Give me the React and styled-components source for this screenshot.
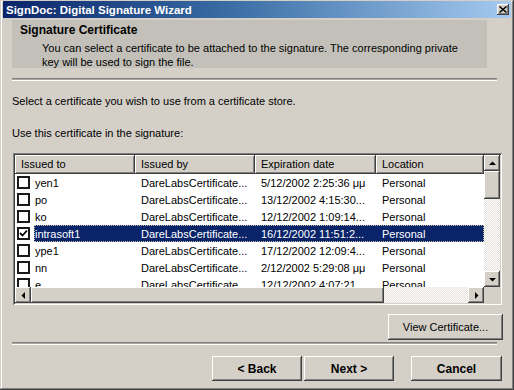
import React from 'react';
import styled, { createGlobalStyle, css } from 'styled-components';

const GlobalStyle = createGlobalStyle`
  html, body {
    margin: 0;
    padding: 0;
    background: #d4d0c8;
  }
  body {
    font-family: "Liberation Sans", Arial, sans-serif;
    font-size: 11px;
    color: #000;
  }
`;

const raised = css`
  background: #d4d0c8;
  box-shadow: inset -1px -1px #404040, inset 1px 1px #ffffff,
    inset -2px -2px #808080, inset 2px 2px #d4d0c8;
`;

const COLUMNS = [
  { key: 'to', title: 'Issued to', width: 120 },
  { key: 'by', title: 'Issued by', width: 120 },
  { key: 'date', title: 'Expiration date', width: 121 },
  { key: 'loc', title: 'Location', width: 108 },
];

const CERTS = [
  { to: 'yen1', by: 'DareLabsCertificate...', date: '5/12/2002 2:25:36 μμ', loc: 'Personal' },
  { to: 'po', by: 'DareLabsCertificate...', date: '13/12/2002 4:15:30...', loc: 'Personal' },
  { to: 'ko', by: 'DareLabsCertificate...', date: '12/12/2002 1:09:14...', loc: 'Personal' },
  { to: 'intrasoft1', by: 'DareLabsCertificate...', date: '16/12/2002 11:51:2...', loc: 'Personal', checked: true, selected: true },
  { to: 'ype1', by: 'DareLabsCertificate...', date: '17/12/2002 12:09:4...', loc: 'Personal' },
  { to: 'nn', by: 'DareLabsCertificate...', date: '2/12/2002 5:29:08 μμ', loc: 'Personal' },
  { to: 'e', by: 'DareLabsCertificate...', date: '12/12/2002 4:07:21 ...', loc: 'Personal' },
];

const Arrow = ({ dir }) => {
  const pts = {
    up: '1,5 8,5 4.5,1.5',
    down: '1,2 8,2 4.5,5.5',
    left: '5,1 5,8 1.5,4.5',
    right: '2,1 2,8 5.5,4.5',
  }[dir];
  const vertical = dir === 'up' || dir === 'down';
  return (
    <svg width={vertical ? 9 : 7} height={vertical ? 7 : 9} viewBox={vertical ? '0 0 9 7' : '0 0 7 9'}>
      <polygon points={pts} fill="#000" />
    </svg>
  );
};

const CheckBox = ({ checked }) => (
  <Box>
    {checked && (
      <svg width="9" height="9" viewBox="0 0 9 9">
        <path d="M1 4 L3.5 6.5 L8 1.5" stroke="#000" strokeWidth="1.8" fill="none" />
      </svg>
    )}
  </Box>
);

const App = () => {
  return (
    <>
      <GlobalStyle />
      <Window>
        <TitleBar>
          <span>SignDoc: Digital Signature Wizard</span>
          <CloseButton>
            <svg width="8" height="7" viewBox="0 0 8 7">
              <path d="M0.5 0.5 L7.5 6.5 M7.5 0.5 L0.5 6.5" stroke="#000" strokeWidth="1.5" />
            </svg>
          </CloseButton>
        </TitleBar>

        <Body>
          <HeaderPanel>
            <PanelTitle>Signature Certificate</PanelTitle>
            <PanelText>
              You can select a certificate to be attached to the signature. The corresponding private
              <br />
              key will be used to sign the file.
            </PanelText>
          </HeaderPanel>

          <Separator $right={5} $top={10} />

          <Label $top={14}>Select a certificate you wish to use from a certificate store.</Label>
          <Label $top={19}>Use this certificate in the signature:</Label>

          <ListBox>
            <ListView>
              <HeaderRow>
                {COLUMNS.map((c) => (
                  <HeaderCell key={c.key} $width={c.width}>
                    {c.title}
                  </HeaderCell>
                ))}
              </HeaderRow>
              {CERTS.map((cert) => (
                <Row key={cert.to}>
                  <CheckCell>
                    <CheckBox checked={cert.checked} />
                  </CheckCell>
                  <RowBody $selected={cert.selected}>
                    {COLUMNS.map((c, i) => (
                      <Cell key={c.key} $width={i === 0 ? c.width - 19 : c.width} $first={i === 0}>
                        {cert[c.key]}
                      </Cell>
                    ))}
                  </RowBody>
                </Row>
              ))}
            </ListView>

            <VScroll>
              <ScrollButton>
                <Arrow dir="up" />
              </ScrollButton>
              <VThumb />
              <Track />
              <ScrollButton>
                <Arrow dir="down" />
              </ScrollButton>
            </VScroll>

            <HScroll>
              <ScrollButton>
                <Arrow dir="left" />
              </ScrollButton>
              <HThumb />
              <Track />
              <ScrollButton>
                <Arrow dir="right" />
              </ScrollButton>
            </HScroll>

            <Corner />
          </ListBox>

          <ViewRow>
            <Button $width={115} $height={26}>View Certificate...</Button>
          </ViewRow>

          <Separator $right={5} $top={2} />

          <ButtonRow>
            <Button $bold $width={90}>&lt; Back</Button>
            <Button $bold $width={90}>Next &gt;</Button>
            <Button $bold $width={91} $gapLeft={15}>Cancel</Button>
          </ButtonRow>
        </Body>
      </Window>
    </>
  );
};

const Window = styled.div`
  width: 514px;
  height: 390px;
  box-sizing: border-box;
  padding: 1px 3px 3px;
  background: #d4d0c8;
  box-shadow: inset -1px -1px #404040, inset 1px 1px #d4d0c8,
    inset -2px -2px #808080, inset 2px 2px #ffffff;
  display: flex;
  flex-direction: column;
  overflow: hidden;
`;

const TitleBar = styled.div`
  height: 17px;
  flex: none;
  display: flex;
  align-items: center;
  justify-content: space-between;
  padding: 0 2px 0 3px;
  background: linear-gradient(90deg, #0a246a 0%, #3a6ea5 45%, #a6caf0 100%);
  color: #fff;
  font-weight: bold;
  font-size: 11.5px;
`;

const CloseButton = styled.div`
  ${raised};
  width: 12px;
  height: 11px;
  display: flex;
  align-items: center;
  justify-content: center;
`;

const Body = styled.div`
  display: flex;
  flex-direction: column;
  padding: 2px 9px 0 9px;
`;

const HeaderPanel = styled.div`
  height: 48px;
  margin-right: 15px;
  box-sizing: border-box;
  padding: 3px 8px 0;
  background: #c3c0b9;
`;

const PanelTitle = styled.div`
  font-weight: bold;
  font-size: 12px;
  line-height: 14px;
`;

const PanelText = styled.div`
  margin-top: 4px;
  padding-left: 22px;
  line-height: 14px;
`;

const Separator = styled.div`
  height: 1px;
  margin-top: ${(p) => p.$top}px;
  margin-right: ${(p) => p.$right}px;
  border-top: 1px solid #808080;
  border-bottom: 1px solid #ffffff;
  background: #a9a6a0;
`;

const Label = styled.div`
  margin-top: ${(p) => p.$top}px;
  line-height: 13px;
`;

const ListBox = styled.div`
  margin-top: 13px;
  margin-left: 1px;
  width: 489px;
  height: 152px;
  box-sizing: border-box;
  padding: 2px;
  background: #fff;
  box-shadow: inset 1px 1px #808080, inset -1px -1px #ffffff,
    inset 2px 2px #404040, inset -2px -2px #d4d0c8;
  display: grid;
  grid-template-columns: 1fr 16px;
  grid-template-rows: 1fr 16px;
`;

const ListView = styled.div`
  overflow: hidden;
  background: #fff;
`;

const HeaderRow = styled.div`
  display: flex;
  height: 19px;
`;

const HeaderCell = styled.div`
  ${raised};
  width: ${(p) => p.$width}px;
  flex: none;
  box-sizing: border-box;
  padding: 0 6px;
  line-height: 19px;
  white-space: nowrap;
  overflow: hidden;
`;

const Row = styled.div`
  display: flex;
  height: 17px;
  align-items: center;
`;

const CheckCell = styled.div`
  width: 19px;
  flex: none;
  display: flex;
  align-items: center;
  padding-left: 2px;
  box-sizing: border-box;
`;

const Box = styled.div`
  width: 13px;
  height: 13px;
  box-sizing: border-box;
  border: 2px solid #1a1a1a;
  background: #fff;
  display: flex;
  align-items: center;
  justify-content: center;
`;

const RowBody = styled.div`
  display: flex;
  height: 17px;
  align-items: center;
  flex: 1;
  background: ${(p) => (p.$selected ? '#0a246a' : 'transparent')};
  color: ${(p) => (p.$selected ? '#fff' : '#000')};
  outline: ${(p) => (p.$selected ? '1px dotted #c8c0a0' : 'none')};
  outline-offset: -1px;
`;

const Cell = styled.div`
  width: ${(p) => p.$width}px;
  flex: none;
  box-sizing: border-box;
  padding-left: ${(p) => (p.$first ? 1 : 6)}px;
  white-space: nowrap;
  overflow: hidden;
`;

const VScroll = styled.div`
  display: flex;
  flex-direction: column;
`;

const HScroll = styled.div`
  display: flex;
`;

const ScrollButton = styled.div`
  ${raised};
  width: 16px;
  height: 16px;
  flex: none;
  display: flex;
  align-items: center;
  justify-content: center;
`;

const VThumb = styled.div`
  ${raised};
  height: 28px;
  flex: none;
`;

const HThumb = styled.div`
  ${raised};
  width: 353px;
  flex: none;
`;

const Track = styled.div`
  flex: 1;
  background: repeating-conic-gradient(#ffffff 0 25%, #e4e1dc 0 50%) 0 0 / 2px 2px;
`;

const Corner = styled.div`
  background: #d4d0c8;
`;

const ViewRow = styled.div`
  display: flex;
  justify-content: flex-end;
  margin-top: 9px;
  margin-right: -1px;
`;

const ButtonRow = styled.div`
  display: flex;
  justify-content: flex-end;
  gap: 2px;
  margin-top: 11px;
  margin-right: 0px;
`;

const Button = styled.div`
  ${raised};
  width: ${(p) => p.$width}px;
  height: ${(p) => p.$height || 25}px;
  margin-left: ${(p) => p.$gapLeft || 0}px;
  box-sizing: border-box;
  display: flex;
  align-items: center;
  justify-content: center;
  font-weight: ${(p) => (p.$bold ? 'bold' : 'normal')};
  font-size: ${(p) => (p.$bold ? '12px' : '11px')};
`;

export default App;
